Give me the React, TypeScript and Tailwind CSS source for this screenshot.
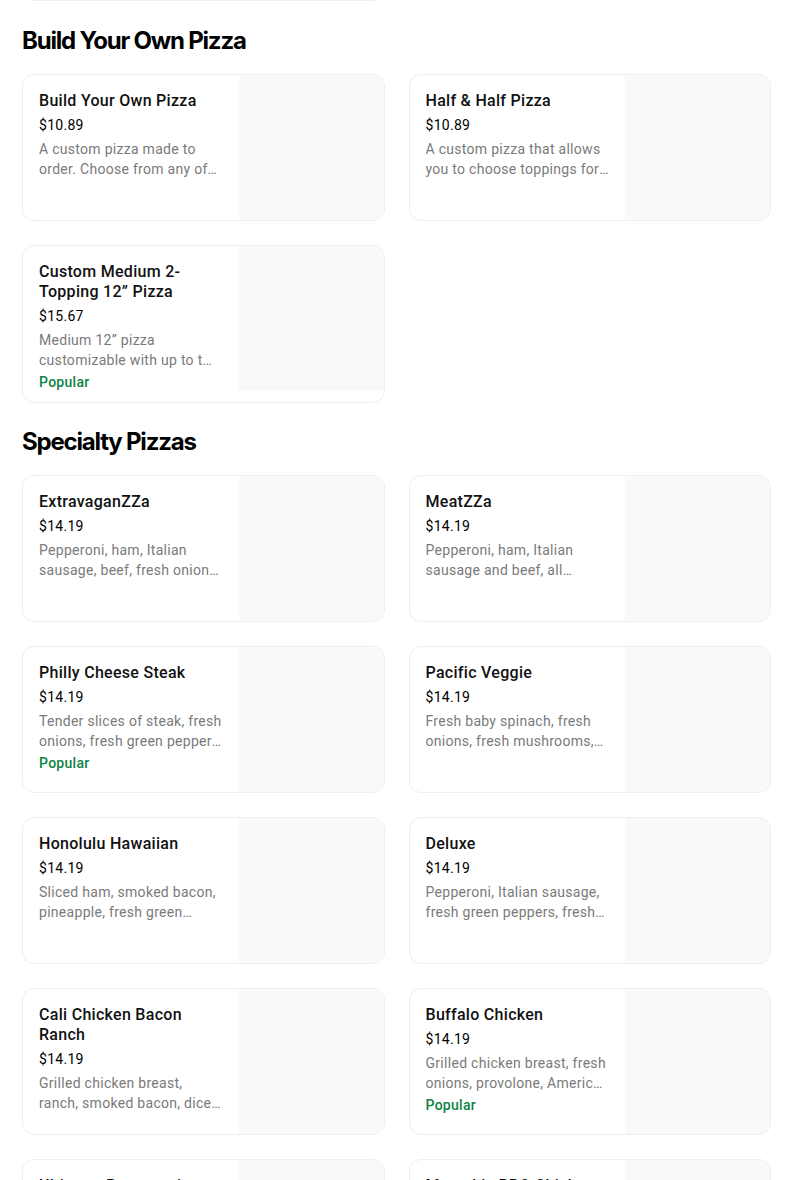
import React from "react";

type Item = { name: string; price: string; desc: string; popular?: boolean };

const build: Item[] = [
  { name: "Build Your Own Pizza", price: "$10.89", desc: "A custom pizza made to order. Choose from any of our delicious crust styles, including Handmade Pan." },
  { name: "Half & Half Pizza", price: "$10.89", desc: "A custom pizza that allows you to choose toppings for each half of your pizza." },
  { name: "Custom Medium 2-Topping 12\u201d Pizza", price: "$15.67", desc: "Medium 12\u201d pizza customizable with up to two toppings of your choice.", popular: true },
];

const specialty: Item[] = [
  { name: "ExtravaganZZa", price: "$14.19", desc: "Pepperoni, ham, Italian sausage, beef, fresh onions, fresh green peppers, fresh mushrooms and black olives." },
  { name: "MeatZZa", price: "$14.19", desc: "Pepperoni, ham, Italian sausage and beef, all sandwiched between two layers of cheese." },
  { name: "Philly Cheese Steak", price: "$14.19", desc: "Tender slices of steak, fresh onions, fresh green peppers, fresh mushrooms and provolone.", popular: true },
  { name: "Pacific Veggie", price: "$14.19", desc: "Fresh baby spinach, fresh onions, fresh mushrooms, tomatoes and black olives." },
  { name: "Honolulu Hawaiian", price: "$14.19", desc: "Sliced ham, smoked bacon, pineapple, fresh green peppers and provolone." },
  { name: "Deluxe", price: "$14.19", desc: "Pepperoni, Italian sausage, fresh green peppers, fresh mushrooms and fresh onions." },
  { name: "Cali Chicken Bacon Ranch", price: "$14.19", desc: "Grilled chicken breast, ranch, smoked bacon, diced tomatoes and provolone." },
  { name: "Buffalo Chicken", price: "$14.19", desc: "Grilled chicken breast, fresh onions, provolone, American cheese and cheddar.", popular: true },
  { name: "Ultimate Pepperoni", price: "$14.19", desc: "Two layers of pepperoni sandwiched between provolone and parmesan." },
  { name: "Memphis BBQ Chicken", price: "$14.19", desc: "Grilled chicken breast, BBQ sauce, fresh onions, provolone and cheddar." },
];

function Card({ item }: { item: Item }) {
  return (
    <div className="flex min-h-[147px] overflow-hidden rounded-xl border border-[#eeeeee] bg-white">
      <div className="flex min-w-0 flex-1 flex-col pl-4 pr-4 pt-4 pb-[10px] tracking-[0.018em]">
        <div className="text-[16px] font-medium leading-5 text-[#111111]">{item.name}</div>
        <div className="mt-1 text-[14px] leading-5 text-black">{item.price}</div>
        <div className="mt-1 line-clamp-2 text-[14px] leading-5 text-[#7a7a7a]">{item.desc}</div>
        {item.popular && (
          <div className="mt-0.5 text-[14px] font-medium leading-5 text-[#0e8345]">Popular</div>
        )}
      </div>
      <div className="h-[145px] w-[145px] shrink-0 bg-[#f9f9f9]" />
    </div>
  );
}

function Section({ title, items, mt }: { title: string; items: Item[]; mt: string }) {
  return (
    <section className={mt}>
      <h2 className="h-9 text-[24px] font-bold leading-9 tracking-[-0.05em] text-black" style={{ fontFamily: "Inter, sans-serif" }}>
        {title}
      </h2>
      <div className="mt-[15px] grid grid-cols-2 items-start gap-x-6 gap-y-6">
        {items.map((it) => (
          <Card key={it.name} item={it} />
        ))}
      </div>
    </section>
  );
}

export default function App() {
  return (
    <div className="min-h-screen overflow-hidden bg-white" style={{ fontFamily: "Roboto, 'Noto Sans', sans-serif" }}>
      <div className="ml-[22px] w-[749px]">
        <div className="-mt-[146px] grid grid-cols-2 gap-x-6">
          <div className="h-[147px] rounded-xl border border-[#eeeeee] bg-white" />
        </div>
        <Section title="Build Your Own Pizza" items={build} mt="mt-[22px]" />
        <Section title="Specialty Pizzas" items={specialty} mt="mt-[21px]" />
      </div>
    </div>
  );
}
